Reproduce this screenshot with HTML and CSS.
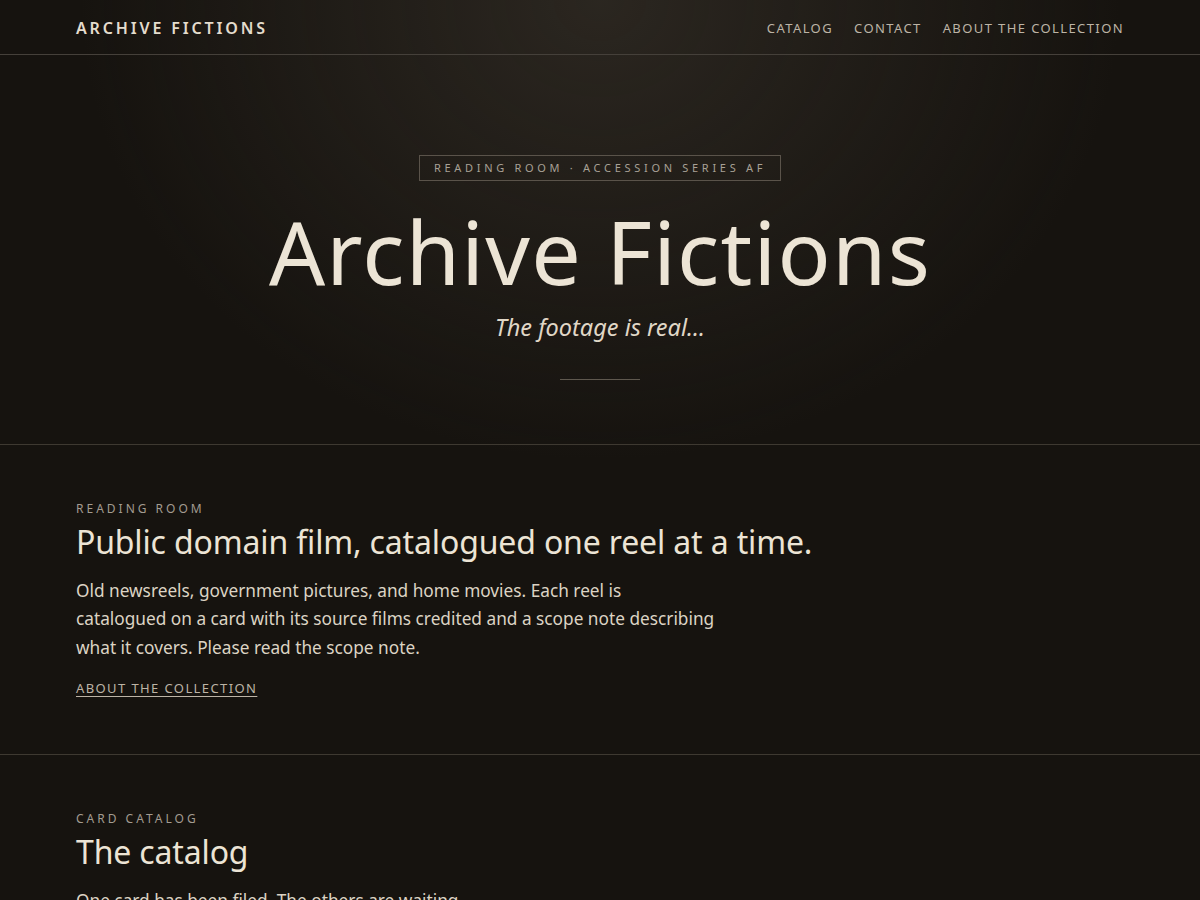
FILE: index.html
```html
<!DOCTYPE html>
<html lang="en">
<head>
<meta charset="utf-8">
<title>Archive Fictions</title>
<link rel="stylesheet" href="styles.css">
</head>
<body>
<div class="page">
  <header class="site-header">
    <div class="container header-inner">
      <a class="logo" href="#">ARCHIVE FICTIONS</a>
      <nav class="nav">
        <a href="#">CATALOG</a>
        <a href="#">CONTACT</a>
        <a href="#">ABOUT THE COLLECTION</a>
      </nav>
    </div>
  </header>

  <section class="hero">
    <div class="tag">READING ROOM · ACCESSION SERIES AF</div>
    <h1 class="hero-title">Archive Fictions</h1>
    <p class="hero-sub">The footage is real...</p>
    <div class="hero-rule"></div>
  </section>

  <section class="block">
    <div class="container">
      <div class="eyebrow">READING ROOM</div>
      <h2 class="heading">Public domain film, catalogued one reel at a time.</h2>
      <p class="lead">Old newsreels, government pictures, and home movies. Each reel is catalogued on a card with its source films credited and a scope note describing what it covers. Please read the scope note.</p>
      <a class="text-link" href="#">ABOUT THE COLLECTION</a>
    </div>
  </section>

  <section class="block">
    <div class="container">
      <div class="eyebrow">CARD CATALOG</div>
      <h2 class="heading">The catalog</h2>
      <p class="lead">One card has been filed. The others are waiting.</p>
    </div>
  </section>
</div>
</body>
</html>
```
FILE: styles.css
```css
* { box-sizing: border-box; }
html, body { margin: 0; padding: 0; }
body {
  background: #16130f;
  color: #e9e1d2;
  font-family: "Noto Sans", "Open Sans", sans-serif;
}
.page {
  background:
    radial-gradient(ellipse 520px 460px at 50% 0px, rgba(60, 54, 46, 0.55), rgba(60, 54, 46, 0) 100%),
    #16130f;
}
a { color: inherit; text-decoration: none; }
.container {
  max-width: 1048px;
  margin: 0 auto;
}
.site-header {
  border-bottom: 1px solid #45403a;
}
.header-inner {
  display: flex;
  align-items: center;
  justify-content: space-between;
  height: 54px;
  padding-top: 1px;
}
.logo {
  font-size: 16px;
  font-weight: 600;
  letter-spacing: 2.85px;
  color: #e4dccd;
}
.nav {
  display: flex;
  gap: 21px;
}
.nav a {
  font-size: 13px;
  letter-spacing: 1.4px;
  color: #bdb4a6;
}
.hero {
  display: flex;
  flex-direction: column;
  align-items: center;
  padding: 100px 0 64px;
  border-bottom: 1px solid #3e3931;
}
.tag {
  border: 1px solid #5a534a;
  padding: 0 14px;
  height: 26px;
  line-height: 24px;
  font-size: 11px;
  letter-spacing: 3.7px;
  color: #a8a196;
}
.hero-title {
  margin: 18px 0 0;
  font-size: 88px;
  font-weight: 400;
  letter-spacing: 1.25px;
  line-height: 1.2;
  color: #ece4d5;
}
.hero-sub {
  margin: 6px 0 0;
  font-size: 23.5px;
  font-style: italic;
  color: #e0d7c7;
  line-height: 33.6px;
}
.hero-rule {
  margin-top: 35px;
  width: 80px;
  height: 1px;
  background: #5f584e;
}
.block {
  padding: 56px 0 56px;
  border-bottom: 1px solid #3e3931;
}
.eyebrow {
  font-size: 12px;
  letter-spacing: 3px;
  color: #a39c91;
  line-height: 16px;
}
.heading {
  margin: 4px 0 0;
  font-size: 32px;
  font-weight: 400;
  line-height: 1.3;
  letter-spacing: -0.15px;
  color: #ece4d5;
}
.lead {
  margin: 14px 0 0;
  max-width: 639.5px;
  font-size: 17.25px;
  line-height: 28.5px;
  color: #dcd3c4;
}
.text-link {
  display: inline-block;
  margin-top: 17px;
  font-size: 13px;
  letter-spacing: 1.4px;
  color: #bdb4a6;
  text-decoration: underline;
  text-underline-offset: 3px;
}
```
